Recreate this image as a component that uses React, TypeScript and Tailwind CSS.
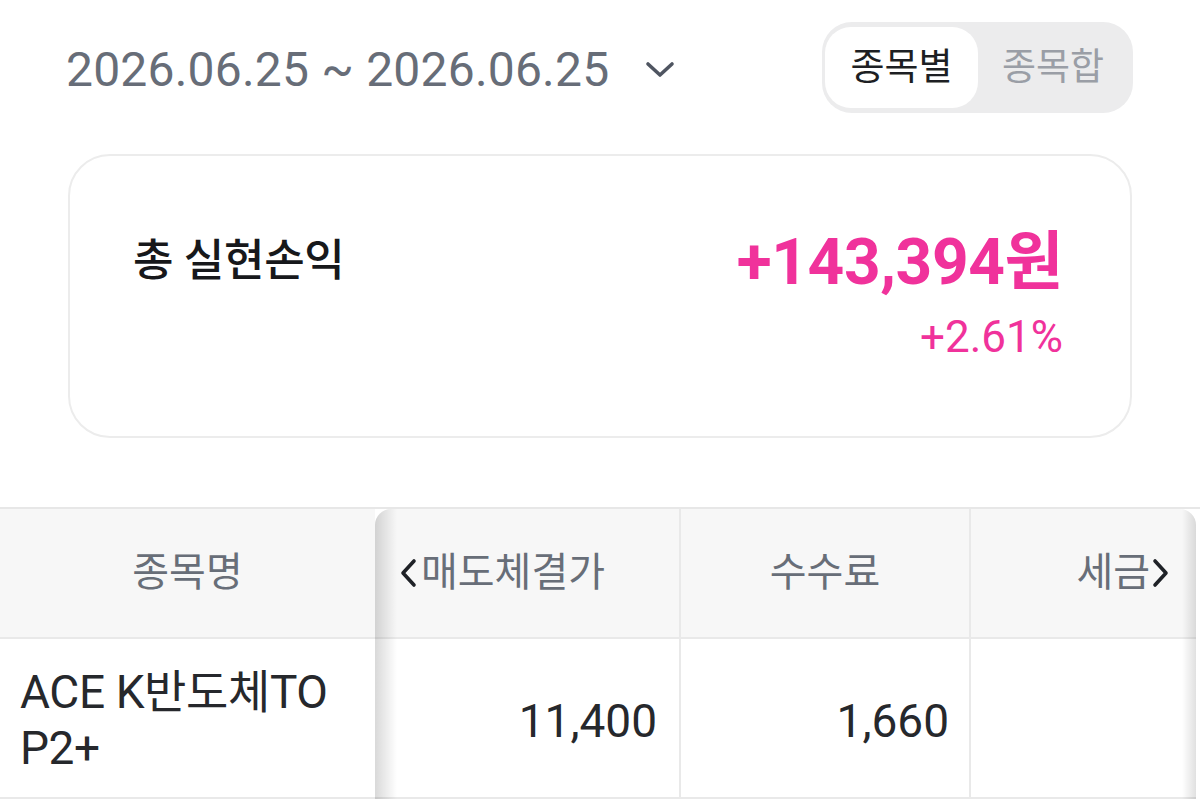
import { useState } from "react";

const Chevron = ({ dir }: { dir: "left" | "right" | "down" }) => {
    if (dir === "down") {
        return (
            <svg width="30" height="18" viewBox="0 0 30 18" fill="none">
                <polyline points="3,3 15,14 27,3" stroke="#4f5561" strokeWidth="3.6" strokeLinecap="round" strokeLinejoin="round" />
            </svg>
        );
    }
    return (
        <svg width="18" height="30" viewBox="0 0 18 30" fill="none">
            <polyline
                points={dir === "left" ? "15,3 4,15 15,27" : "3,3 14,15 3,27"}
                stroke="#1f2227"
                strokeWidth="3.6"
                strokeLinecap="round"
                strokeLinejoin="round"
            />
        </svg>
    );
};

const App = () => {
    const [mode, setMode] = useState("종목별");
    const modes = ["종목별", "종목합"];

    return (
        <div className="w-[1200px] h-[804px] overflow-hidden bg-white font-['Roboto','Noto_Sans_CJK_KR',sans-serif]">
            {/* 기간 + 보기 방식 */}
            <div className="flex items-center justify-between pl-[66px] pr-[67px] pt-[22px]">
                <button className="flex items-center gap-[36px] pt-[4px]">
                    <span className="text-[48px] leading-none text-[#676d78] tracking-[0.2px]">
                        2026.06.25 ~ 2026.06.25
                    </span>
                    <Chevron dir="down" />
                </button>
                <div className="flex w-[311px] h-[91px] rounded-[30px] bg-[#ececed] p-[5px] pl-[3px]">
                    {modes.map((m) => (
                        <button
                            key={m}
                            onClick={() => setMode(m)}
                            className={`flex items-center justify-center rounded-[26px] text-[37px] ${
                                m === mode ? "w-[153px] bg-white text-[#1d1f23]" : "flex-1 text-[#9a9ea6]"
                            }`}
                        >
                            {m}
                        </button>
                    ))}
                </div>
            </div>

            {/* 총 실현손익 카드 */}
            <div className="mx-[68px] mt-[41px] h-[284px] rounded-[42px] border-2 border-[#ececec] flex justify-between pl-[63px] pr-[67px] pt-[74px]">
                <div className="text-[44px] font-medium text-[#17181b] leading-[62px] tracking-[-0.3px]">총 실현손익</div>
                <div className="flex flex-col items-end text-[#f0329b]">
                    <div className="text-[64px] font-bold leading-[66px] tracking-[-0.4px]">+143,394원</div>
                    <div className="text-[44px] leading-[48px] mt-[17px]">+2.61%</div>
                </div>
            </div>

            {/* 종목별 테이블 */}
            <div className="mt-[69px] border-t-2 border-[#e7e7e7] flex">
                <div className="w-[375px] shrink-0">
                    <div className="h-[130px] bg-[#f7f7f7] border-b-2 border-[#e9e9e9] flex items-center justify-center text-[40px] text-[#686e78]">
                        종목명
                    </div>
                    <div className="h-[160px] bg-white border-b-2 border-[#e9e9e9] flex items-center pl-[20px] pr-[28px] pt-[4px] text-[46px] leading-[56px] text-[#26282c] tracking-[-0.4px] break-all">
                        ACE K반도체TOP2+
                    </div>
                </div>
                <div className="relative w-[821px] shrink-0 rounded-t-[16px] overflow-hidden">
                    <div className="flex h-[130px] bg-[#f7f7f7] border-b-2 border-[#e9e9e9] text-[40px] text-[#686e78]">
                        <div className="w-[306px] shrink-0 flex items-center pl-[24px] gap-[4px] border-r-2 border-[#e9e9e9]">
                            <Chevron dir="left" />
                            <span>매도체결가</span>
                        </div>
                        <div className="w-[290px] shrink-0 flex items-center justify-center border-r-2 border-[#e9e9e9]">
                            수수료
                        </div>
                        <div className="flex-1 flex items-center justify-end pr-[26px] gap-[2px]">
                            <span>세금</span>
                            <Chevron dir="right" />
                        </div>
                    </div>
                    <div className="flex h-[160px] border-b-2 border-[#e9e9e9] text-[46px] text-[#26282c]">
                        <div className="w-[306px] shrink-0 flex items-center justify-end pr-[22px] pt-[6px] border-r-2 border-[#e9e9e9]">
                            11,400
                        </div>
                        <div className="w-[290px] shrink-0 flex items-center justify-end pr-[20px] pt-[6px] border-r-2 border-[#e9e9e9]">
                            1,660
                        </div>
                        <div className="flex-1" />
                    </div>
                    {/* 스크롤 그림자 */}
                    <div className="pointer-events-none absolute inset-y-0 left-0 w-[22px] bg-gradient-to-r from-black/15 to-transparent" />
                    <div className="pointer-events-none absolute inset-y-0 right-0 w-[14px] bg-gradient-to-l from-black/12 to-transparent" />
                </div>
            </div>
        </div>
    );
};

export default App;
